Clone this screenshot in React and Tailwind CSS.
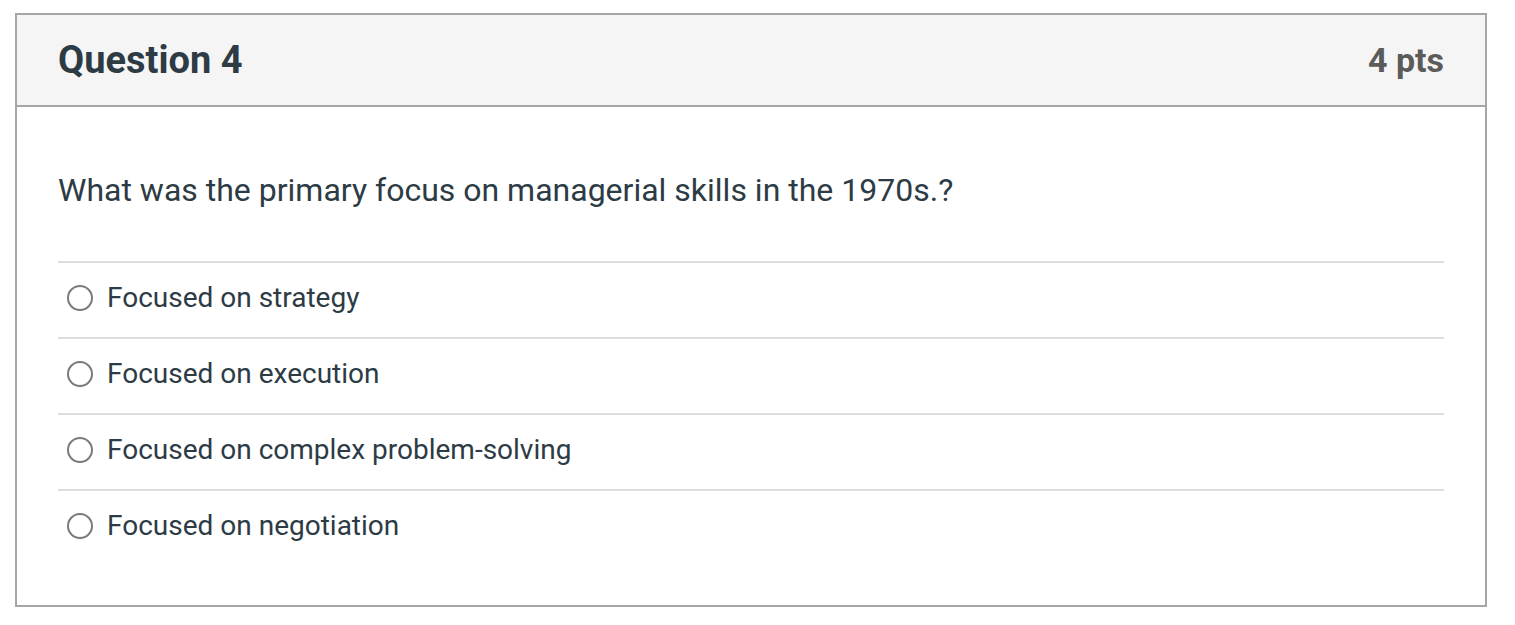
import React from 'react';

const answers = [
  'Focused on strategy',
  'Focused on execution',
  'Focused on complex problem-solving',
  'Focused on negotiation',
];

function Radio() {
  return (
    <span className="w-[26px] h-[26px] rounded-full border-2 border-[#7a7a7a] bg-white shrink-0" />
  );
}

export default function App() {
  return (
    <div className="min-h-screen bg-white pt-[13px] pl-[15px] font-['Roboto',sans-serif] text-[#2d3b45]">
      <div className="w-[1472px] h-[594px] border-2 border-[#a6a6a6] flex flex-col">
        <div className="h-[92px] bg-[#f5f5f5] border-b-2 border-[#a6a6a6] flex items-center justify-between px-[41px]">
          <h2 className="text-[38px] font-bold leading-none">Question 4</h2>
          <span className="text-[34px] font-bold text-[#5b5b5b] leading-none">4 pts</span>
        </div>
        <div className="px-[41px] pt-[62px]">
          <p className="text-[32px] leading-[42px]">What was the primary focus on managerial skills in the 1970s.?</p>
          <div className="mt-[50px]">
            {answers.map((a) => (
              <div key={a} className="h-[76px] border-t-2 border-[#dddddd] flex items-center gap-[14px] pl-[9px] pb-[4px]">
                <Radio />
                <span className="text-[28px] leading-none">{a}</span>
              </div>
            ))}
          </div>
        </div>
      </div>
    </div>
  );
}
